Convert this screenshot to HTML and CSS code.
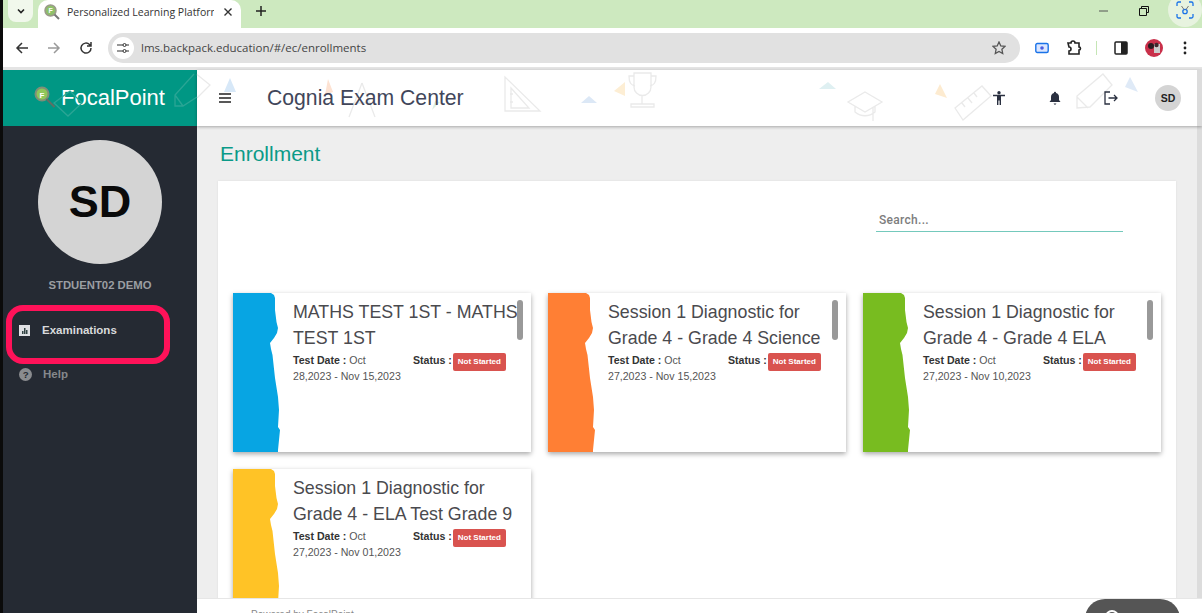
FILE: index.html
```html
<!DOCTYPE html>
<html lang="en">
<head>
<meta charset="utf-8">
<title>Personalized Learning Platform</title>
<link rel="stylesheet" href="styles.css">
</head>
<body>
<div class="window">
  <div class="tabstrip">
    <button class="tab-search"><svg width="12" height="12" viewBox="0 0 12 12"><path d="M3 4.500l3 3 3-3" fill="none" stroke="#222" stroke-width="1.600"/></svg></button>
    <div class="tab">
      <svg class="favicon" width="16" height="16" viewBox="0 0 16 16"><circle cx="6.500" cy="6.500" r="5.500" fill="#8fc06a" stroke="#9a9a8a" stroke-width="1.500"/><path d="M10.500 10.500l4.500 4.500" stroke="#777" stroke-width="2"/><text x="4.500" y="9" class="fav-text">F</text></svg>
      <span class="tab-title">Personalized Learning Platform</span>
      <svg class="tab-close" width="10" height="10" viewBox="0 0 10 10"><path d="M1.500 1.500l7 7M8.500 1.500l-7 7" stroke="#333" stroke-width="1.400"/></svg>
    </div>
    <svg class="newtab" width="12" height="12" viewBox="0 0 12 12"><path d="M6 1v10M1 6h10" stroke="#222" stroke-width="1.500"/></svg>
    <div class="winctl">
      <svg class="win-min" width="10" height="10" viewBox="0 0 10 10"><path d="M0 5h9" stroke="#555" stroke-width="1"/></svg>
      <svg class="win-max" width="10" height="10" viewBox="0 0 10 10"><path d="M2.500 2.500V.5h7v6H7.500M.5 2.500h7v7h-7z" fill="none" stroke="#111" stroke-width="1"/></svg>
      <div class="lens"><svg width="18" height="18" viewBox="0 0 18 18"><path d="M1 5V2.500A1.500 1.500 0 0 1 2.500 1H5M13 1h2.500A1.500 1.500 0 0 1 17 2.500V5M17 13v2.500a1.500 1.500 0 0 1-1.500 1.500H13M5 17H2.500A1.500 1.500 0 0 1 1 15.500V13" fill="none" stroke="#1a73e8" stroke-width="1.300"/><circle cx="9" cy="10.500" r="2.200" fill="none" stroke="#1a73e8" stroke-width="1.300"/><path d="M5.500 5l2.500 3.500M12.500 5L10 8.500" stroke="#777" stroke-width="1"/></svg></div>
    </div>
  </div>
  <div class="toolbar">
    <svg class="nav-ic" width="14" height="14" viewBox="0 0 14 14"><path d="M13 7H2M7 2L2 7l5 5" fill="none" stroke="#333" stroke-width="1.500"/></svg>
    <svg class="nav-ic" width="14" height="14" viewBox="0 0 14 14"><path d="M1 7h11M7 2l5 5-5 5" fill="none" stroke="#9a9a9a" stroke-width="1.500"/></svg>
    <svg class="nav-ic" width="14" height="14" viewBox="0 0 14 14"><path d="M12 7a5 5 0 1 1-1.500-3.500L12 5M12 1v4H8" fill="none" stroke="#333" stroke-width="1.500"/></svg>
    <div class="omnibox">
      <span class="site-ic"><svg width="12" height="12" viewBox="0 0 12 12"><path d="M0 3h6M9 9h3M0 9h6M9 3h3" stroke="#333" stroke-width="1.200"/><circle cx="7.500" cy="3" r="1.500" fill="none" stroke="#333"/><circle cx="7.500" cy="9" r="1.500" fill="none" stroke="#333"/></svg></span>
      <span class="url">lms.backpack.education/#/ec/enrollments</span>
      <svg class="star" width="14" height="14" viewBox="0 0 14 14"><path d="M7 1l1.800 3.900 4.200.5-3.100 2.900.8 4.200L7 10.400 3.300 12.500l.8-4.200L1 5.400l4.200-.5z" fill="none" stroke="#555" stroke-width="1.300"/></svg>
    </div>
    <div class="tb-icons">
      <svg class="tb-cast" width="14" height="12" viewBox="0 0 14 12"><rect x=".8" y="1.500" width="12.400" height="9" rx="1.500" fill="#dbe6ff" stroke="#1a73e8" stroke-width="1.400"/><circle cx="7" cy="6" r="1.800" fill="#4a5de0"/></svg>
      <svg class="tb-puzzle" width="16" height="16" viewBox="0 0 16 16"><path d="M2 3h3a2 2 0 0 1 4 0h4v4a1.500 1.500 0 0 1 0 3v4H3v-3a1.500 1.500 0 0 0 0-4z" fill="none" stroke="#222" stroke-width="1.600"/></svg>
      <span class="tb-divider"></span>
      <svg class="tb-panel" width="14" height="14" viewBox="0 0 14 14"><rect x="1" y="1" width="12" height="12" rx="1" fill="none" stroke="#222" stroke-width="1.500"/><rect x="7" y="1" width="6" height="12" fill="#222"/></svg>
      <svg class="tb-profile" width="18" height="18" viewBox="0 0 18 18"><circle cx="9" cy="9" r="9" fill="#c9304a"/><circle cx="6" cy="7" r="3" fill="#2a1a20"/><rect x="9" y="5" width="6" height="9" fill="#ccc"/><circle cx="11.500" cy="6" r="2.200" fill="#40272c"/></svg>
      <svg class="tb-menu" width="4" height="14" viewBox="0 0 4 14"><circle cx="2" cy="2" r="1.400" fill="#222"/><circle cx="2" cy="7" r="1.400" fill="#222"/><circle cx="2" cy="12" r="1.400" fill="#222"/></svg>
    </div>
  </div>
  <div class="page">
    <div class="topbar">
      <div class="brand">
        <svg class="brand-logo" width="24" height="24" viewBox="0 0 24 24"><circle cx="8" cy="8" r="6.500" fill="#8fc65a" stroke="#7f8f78" stroke-width="2"/><path d="M12.500 13l8 8" stroke="#5f6f64" stroke-width="2"/><text x="5.500" y="11.500" class="logo-f">F</text></svg>
        <span class="brand-name">FocalPoint</span>
      </div>
      <header class="header">
        <svg class="burger" width="12" height="10" viewBox="0 0 12 10"><path d="M0 1h12M0 5h12M0 9h12" stroke="#222" stroke-width="1.500"/></svg>
        <h1 class="app-title">Cognia Exam Center</h1>
        <div class="hdr-icons">
          <svg class="hdr-person" width="12" height="14" viewBox="0 0 12 14"><circle cx="6" cy="1.700" r="1.700" fill="#2a3040"/><path d="M0 3.800h12v1.500H8V14H6.600V9.500H5.400V14H4V5.300H0z" fill="#2a3040"/></svg>
          <svg class="hdr-bell" width="12" height="14" viewBox="0 0 12 14"><path d="M6 .8a1 1 0 0 1 1 1.200C9 2.500 10 4 10 6v3l1.500 2H.5L2 9V6c0-2 1-3.500 3-4A1 1 0 0 1 6 .8zM4.500 12.500h3L6 14z" fill="#2a3040"/></svg>
          <svg class="hdr-exit" width="14" height="14" viewBox="0 0 14 14"><path d="M6 1H1v12h5M4.500 7H13M10 4l3 3-3 3" fill="none" stroke="#2a3040" stroke-width="1.300"/></svg>
          <span class="hdr-avatar">SD</span>
        </div>
      </header>
      <svg class="decor" width="1199" height="56" viewBox="3 70 1199 56" aria-hidden="true">
        <g fill="none" stroke="#eaeaea" stroke-width="1.300">
          <path d="M197 74.500l13 10.500-13 13"/>
          <path d="M505 77v34h35zM510 94h3M510 102h3M511 88l18 20h-18z"/>
          <path d="M362 83l-13 34M362 83l13 34M353 103h18"/>
          <path d="M634 73h17v14a8.500 8.500 0 0 1-17 0zM634 76h-5c0 7 2 9 6 10M651 76h5c0 7-2 9-6 10M642 96v8M631 107h23v-3h-23z"/>
          <path d="M865 92l17 10-17 10-17-10zM855 106v6c6 5 14 5 20 0v-6M873 107v14"/>
          <path d="M955 108l27-22 9 10-28 24zM962 103l3 4M968 98l4 5M974 93l3 4"/>
          <path d="M1103 74l9 11-22 22-13 1v-12zM1077 97l11 11"/>
        </g>
        <g fill="none" stroke="#2aa595" stroke-width="1.300">
          <path d="M194 74l-19 21v11h8l14-9M175 95l8 11"/>
          <path d="M54 103l16-12 12 12-14 13z"/>
        </g>
        <path d="M230 78l6 14h-12z" fill="#d7e8f8"/>
        <path d="M328 79l5 13-8 3z" fill="#fde2d2"/>
        <path d="M581 103l8-7 8 7z" fill="#dce8f6"/>
        <path d="M625 82l-11 9 11 5z" fill="#fdeed4"/>
        <path d="M819 89l9-7 8 7z" fill="#dff0f2"/>
        <path d="M940 84l-5 10 12 4z" fill="#fdebd0"/>
        <path d="M1130 77l-5 10 13 5z" fill="#dfeaf7"/>
        <path d="M432 110l3-9 5 1z" fill="#dcf1e4"/>
      </svg>
    </div>
    <div class="body">
      <aside class="sidebar">
        <div class="avatar">SD</div>
        <div class="student">STDUENT02 DEMO</div>
        <nav class="menu">
          <a class="menu-item active"><svg width="11" height="11" viewBox="0 0 11 11"><rect width="11" height="11" fill="#dfe0e4"/><path d="M3 9V6h1.500v3zM5 9V3h1.500v6zM7 9V5h1.500v4z" fill="#344"/></svg>Examinations</a>
          <a class="menu-item"><svg width="13" height="13" viewBox="0 0 12 12"><circle cx="6" cy="6" r="6" fill="#8a8c8f"/><text x="3.500" y="9.500" class="help-q">?</text></svg>Help</a>
        </nav>
        <div class="highlight"></div>
      </aside>
      <main class="main">
        <div class="content">
          <h2 class="page-title">Enrollment</h2>
          <section class="panel">
            <div class="search-row"><div class="search">Search...</div></div>
            <div class="cards">
              <article class="card">
                <div class="torn blue"></div>
                <div class="card-body">
                  <h3 class="card-title">MATHS TEST 1ST - MATHS TEST 1ST</h3>
                  <div class="meta"><div class="dates"><b>Test Date :</b> Oct <span class="range">28,2023 - Nov 15,2023</span></div><div class="status"><b>Status :</b><span class="badge">Not Started</span></div></div>
                </div>
                <div class="thumb"></div>
              </article>
              <article class="card">
                <div class="torn orange"></div>
                <div class="card-body">
                  <h3 class="card-title">Session 1 Diagnostic for Grade 4 - Grade 4 Science</h3>
                  <div class="meta"><div class="dates"><b>Test Date :</b> Oct <span class="range">27,2023 - Nov 15,2023</span></div><div class="status"><b>Status :</b><span class="badge">Not Started</span></div></div>
                </div>
                <div class="thumb"></div>
              </article>
              <article class="card">
                <div class="torn green"></div>
                <div class="card-body">
                  <h3 class="card-title">Session 1 Diagnostic for Grade 4 - Grade 4 ELA</h3>
                  <div class="meta"><div class="dates"><b>Test Date :</b> Oct <span class="range">27,2023 - Nov 10,2023</span></div><div class="status"><b>Status :</b><span class="badge">Not Started</span></div></div>
                </div>
                <div class="thumb"></div>
              </article>
              <article class="card">
                <div class="torn yellow"></div>
                <div class="card-body">
                  <h3 class="card-title">Session 1 Diagnostic for Grade 4 - ELA Test Grade 9</h3>
                  <div class="meta"><div class="dates"><b>Test Date :</b> Oct <span class="range">27,2023 - Nov 01,2023</span></div><div class="status"><b>Status :</b><span class="badge">Not Started</span></div></div>
                </div>
              </article>
            </div>
          </section>
        </div>
        <footer class="footer">
          <span class="powered">Powered by FocalPoint</span>
          <span class="help-pill"><span class="help-ring"></span></span>
        </footer>
      </main>
    </div>
  </div>
</div>
</body>
</html>
```

FILE: styles.css
```css
* { box-sizing: border-box; }
html, body { margin: 0; height: 100%; overflow: hidden; background: #0b0b0b; }
body { font-family: "Liberation Sans", Arial, sans-serif; }
.window { height: 613px; display: flex; flex-direction: column; padding-left: 3px; background: #0b0b0b; }

.tabstrip { height: 28px; flex: none; background: #cde9bf; display: flex; align-items: flex-start; padding-left: 5px; position: relative; }
.tab-search { width: 25px; height: 22px; border: 0; padding: 0; background: #f1f8ec; border-radius: 0 0 8px 8px; display: flex; align-items: center; justify-content: center; }
.tab { width: 203px; height: 28px; margin-left: 5px; background: #fff; border-radius: 10px 10px 0 0; display: flex; align-items: center; padding: 0 0 5px 6px; position: relative; }
.favicon { flex: none; }
.fav-text { font: bold 7px "Liberation Sans", sans-serif; fill: #fff; }
.tab-title { font: 10.500px/14px "Open Sans", sans-serif; color: #333; margin-left: 7px; width: 147px; white-space: nowrap; overflow: hidden; }
.tab-close { margin-left: 9px; flex: none; }
.newtab { margin: 5px 0 0 14px; }
.winctl { margin-left: auto; display: flex; align-items: center; height: 22px; }
.win-min { margin-right: 30px; }
.win-max { margin-right: 19px; }
.lens { width: 34px; height: 34px; background: #e7f3df; border-radius: 50%; display: flex; align-items: center; justify-content: center; position: relative; top: -1px; z-index: 1; }

.toolbar { height: 42px; flex: none; background: #fff; display: flex; align-items: center; padding: 1px 0 0 12px; border-bottom: 3px solid #e4e4e4; }
.nav-ic { margin-right: 18px; flex: none; }
.omnibox { width: 912px; height: 30px; margin-left: -3px; background: #e1e1e1; border-radius: 15px; display: flex; align-items: center; padding: 0 14px 0 4px; }
.site-ic { width: 22px; height: 22px; border-radius: 50%; background: #fff; display: flex; align-items: center; justify-content: center; }
.url { font: 11.500px/16px "Open Sans", sans-serif; color: #454545; margin-left: 7px; }
.star { margin-left: auto; }
.tb-icons { flex: 1; display: flex; align-items: center; padding-left: 15px; }
.tb-puzzle { margin-left: 17px; }
.tb-panel { margin-left: 17px; }
.tb-profile { margin-left: 17px; }
.tb-menu { margin-left: 20px; }
.tb-divider { width: 1px; height: 14px; background: #c5e6b5; margin-left: 14px; }

.page { flex: 1; min-height: 0; display: flex; flex-direction: column; background: #eee; }
.topbar { height: 56px; flex: none; display: flex; position: relative; }
.brand { width: 194px; background: #009784; display: flex; align-items: center; padding-left: 31px; }
.brand-logo { flex: none; }
.logo-f { font: bold 8px "Liberation Sans", sans-serif; fill: #fff; }
.brand-name { color: #fff; font-size: 22px; margin-left: 3px; }
.header { flex: 1; background: #fff; display: flex; align-items: center; padding-left: 22px; box-shadow: 0 1px 3px rgba(0,0,0,.3); border-right: 5px solid #dcdcdc; }
.burger { flex: none; }
.app-title { font-size: 21.200px; font-weight: 400; color: #41465a; margin: 0 0 0 36px; position: relative; z-index: 1; }
.hdr-icons { margin-left: auto; display: flex; align-items: center; position: relative; z-index: 1; }
.hdr-bell { margin-left: 44px; }
.hdr-exit { margin-left: 43px; }
.hdr-avatar { width: 26px; height: 26px; margin: 0 16px 0 37px; border-radius: 50%; background: #d4d4d4; font-size: 10.500px; font-weight: 700; color: #222; display: flex; align-items: center; justify-content: center; }
.decor { position: absolute; left: 0; top: 0; pointer-events: none; }

.body { flex: 1; min-height: 0; display: flex; }
.sidebar { width: 194px; flex: none; background: #252a33; position: relative; display: flex; flex-direction: column; align-items: center; padding-top: 14px; }
.avatar { width: 124px; height: 124px; border-radius: 50%; background: #d4d4d4; color: #0a0a0a; font-size: 45px; font-weight: 700; display: flex; align-items: center; justify-content: center; }
.student { margin-top: 14px; font-size: 11.300px; font-weight: 700; line-height: 14px; color: #9b9ea2; }
.menu { width: 100%; margin-top: 16px; display: flex; flex-direction: column; }
.menu-item { height: 44px; display: flex; align-items: center; gap: 11px; padding-left: 16px; font-size: 11.500px; font-weight: 700; color: #85888c; }
.menu-item.active { color: #d9dadc; gap: 12px; }
.help-q { font: bold 9px "Liberation Sans", sans-serif; fill: #252a33; }
.highlight { position: absolute; left: 3px; top: 179px; width: 164px; height: 59px; border: 6px solid #ff1259; border-radius: 17px; }

.main { flex: 1; min-width: 0; display: flex; flex-direction: column; }
.content { flex: 1; min-height: 0; overflow: hidden; padding: 0 21px 0 21px; border-right: 5px solid #dcdcdc; }
.page-title { margin: 15px 0 14px 2px; font-size: 21px; font-weight: 400; line-height: 26px; color: #0a9a88; }
.panel { background: #fff; height: 440px; padding: 0 15px; box-shadow: 0 0 2px rgba(0,0,0,.08); }
.search-row { height: 112px; display: flex; justify-content: flex-end; padding: 27px 38px 0 0; }
.search { width: 247px; height: 24px; border-bottom: 1.500px solid #74c9bc; padding: 4px 0 0 3px; font: 500 12px/16px "Roboto", sans-serif; letter-spacing: .3px; color: #7d7d7d; }
.cards { display: grid; grid-template-columns: repeat(3, 298px); gap: 17px; }
.card { height: 159px; background: #fff; display: flex; position: relative; box-shadow: 0 2px 5px rgba(0,0,0,.35); }
.torn { width: 47px; flex: none; clip-path: polygon(0 0, 38px 0, 41px 2px, 42px 5px, 42px 17px, 43.500px 29px, 45px 35px, 44px 40px, 41px 45px, 37px 50px, 38px 56px, 39.500px 62px, 42px 85px, 45px 104px, 46px 117px, 45px 134px, 47px 137px, 45px 157px, 45px 159px, 0 159px); }
.blue { background: #07a5e3; }
.orange { background: #ff7f34; }
.green { background: #78bc20; }
.yellow { background: #ffc326; }
.card-body { padding: 6px 0 0 13px; flex: 1; min-width: 0; }
.card-title { margin: 0; width: 228px; font-size: 17.800px; font-weight: 400; line-height: 26px; color: #4a4a4e; }
.meta { display: flex; margin-top: 1px; font-size: 10.600px; line-height: 16px; color: #555; }
.dates { width: 120px; flex: none; }
.range { white-space: nowrap; }
.dates b, .status b { color: #333; }
.status { display: flex; align-items: flex-start; flex: none; }
.badge { margin: 1px 0 0 1px; width: 53px; height: 18px; border-radius: 2px; background: #d9534f; color: #fff; font-size: 8px; font-weight: 700; line-height: 17px; text-align: center; }
.thumb { position: absolute; right: 8px; top: 7px; width: 6px; height: 40px; border-radius: 3px; background: #999; }

.footer { height: 15px; flex: none; background: #fff; border-top: 1px solid #e6e6e6; display: flex; position: relative; overflow: hidden; }
.powered { margin: 10px 0 0 54px; font-size: 10px; color: #888; }
.help-pill { position: absolute; left: 888px; top: 0; width: 95px; height: 30px; background: #555; border-radius: 20px 20px 0 0; }
.help-ring { position: absolute; left: 20px; top: 11px; width: 14px; height: 14px; border: 2px solid #fff; border-radius: 50%; }
```
